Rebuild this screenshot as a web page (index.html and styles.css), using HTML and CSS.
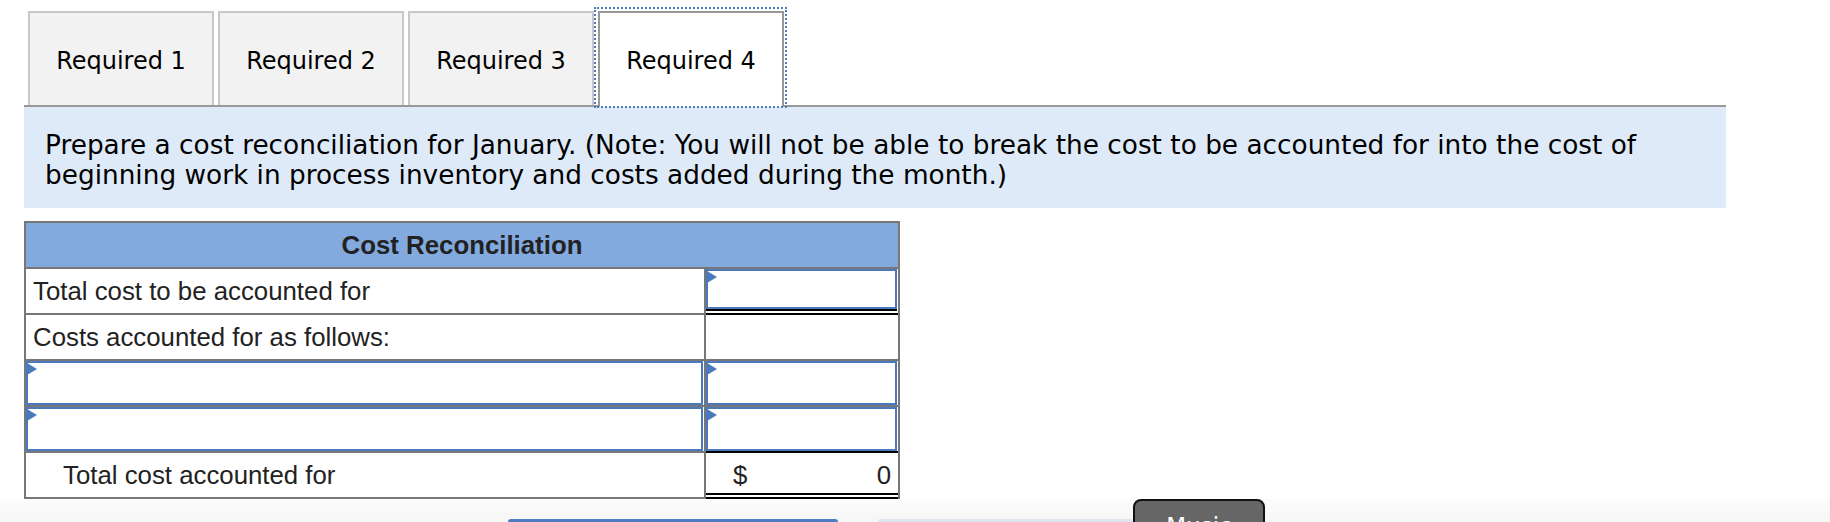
FILE: index.html
```html
<!DOCTYPE html>
<html>
<head>
    <title>Cost Reconciliation</title>
    <link rel="stylesheet" href="styles.css">
</head>
<body>
    <div class="page">
        <div class="tabs">
            <button class="tab">Required 1</button>
            <button class="tab">Required 2</button>
            <button class="tab">Required 3</button>
            <button class="tab active">Required 4</button>
        </div>

        <div class="prompt">
            Prepare a cost reconciliation for January. (Note: You will not be able to break the cost to be accounted for into the cost of beginning work in process inventory and costs added during the month.)
        </div>

        <div class="recon">
            <div class="recon-title">Cost Reconciliation</div>

            <div class="cell label">Total cost to be accounted for</div>
            <div class="cell"><div class="entry underlined"></div></div>

            <div class="cell label">Costs accounted for as follows:</div>
            <div class="cell"></div>

            <div class="cell"><div class="entry"></div></div>
            <div class="cell"><div class="entry"></div></div>

            <div class="cell"><div class="entry"></div></div>
            <div class="cell"><div class="entry"></div></div>

            <div class="cell label indent">Total cost accounted for</div>
            <div class="cell grand-total">
                <span>$</span>
                <span>0</span>
            </div>
        </div>
    </div>

    <div class="footer">
        <div class="bar bar-blue"></div>
        <div class="bar bar-light"></div>
        <button class="music-btn">Music</button>
    </div>
</body>
</html>
```

FILE: styles.css
```css
html, body {
    overflow: hidden;
}
body {
    margin: 0;
    background: white;
    font-family: "DejaVu Sans", Verdana, sans-serif;
    color: #000;
}
.page {
    padding-left: 24px;
    width: 1702px;
}

/* tab strip */
.tabs {
    display: flex;
    align-items: flex-end;
    gap: 4px;
    padding: 11px 0 0 4px;
    border-bottom: 2px solid #999;
}
.tab {
    width: 186px;
    height: 94px;
    box-sizing: border-box;
    background: #f2f2f2;
    border: 2px solid #c8c8c8;
    border-bottom: none;
    font-family: "DejaVu Sans", Verdana, sans-serif;
    font-size: 24px;
    color: #000;
    padding: 3px 0 0;
    cursor: pointer;
}
.tab.active {
    position: relative;
    height: 96px;
    margin-bottom: -2px;
    padding-bottom: 1px;
    background: white;
    border-color: #999;
}
.tab.active::after {
    content: '';
    position: absolute;
    top: -6px;
    left: -6px;
    right: -5px;
    bottom: -1px;
    border: 2px dotted #4a7ebb;
}

/* instructions */
.prompt {
    background: #deeaf7;
    padding: 23px 60px 18px 21px;
    font-size: 26.35px;
    line-height: 30px;
}

/* reconciliation grid */
.recon {
    display: grid;
    grid-template-columns: 678px 192px;
    grid-auto-rows: 44px;
    gap: 2px;
    width: 872px;
    margin-top: 13px;
    border: 2px solid #777;
    background: #777;
    font-family: "Liberation Sans", Arial, sans-serif;
    font-size: 25.8px;
    color: #222;
}
.recon-title {
    grid-column: 1 / 3;
    background: #83aadf;
    font-weight: bold;
    display: flex;
    align-items: center;
    justify-content: center;
}
.cell {
    background: white;
    display: flex;
    align-items: center;
}
.label {
    padding: 0 0 0 7px;
}
.label.indent {
    padding-left: 37px;
}
.entry {
    position: relative;
    align-self: stretch;
    flex: 1;
    margin-right: 1px;
    border: 2px solid #4b79bd;
}
.entry::before {
    content: '';
    position: absolute;
    top: 0;
    left: -1px;
    border-left: 10px solid #4b79bd;
    border-top: 6.5px solid transparent;
    border-bottom: 6.5px solid transparent;
}
.entry.underlined {
    align-self: flex-start;
    height: 36px;
    flex: none;
    width: 187px;
    box-shadow: 0 2px 0 #000;
}
.cell:has(.underlined) {
    box-shadow: 0 2px 0 #000;
}
.grand-total {
    justify-content: space-between;
    padding: 0 7px 0 27px;
    background: linear-gradient(to top, #fff 2px, #000 2px, #000 4px, #fff 4px);
    box-shadow: 0 -2px 0 #000, 0 2px 0 #000;
}

/* bottom toolbar, cut off by the window */
.footer {
    position: relative;
    height: 23px;
    background: linear-gradient(#fcfcfc, #f6f6f6);
    display: flex;
    align-items: flex-end;
    overflow: hidden;
}
.bar {
    height: 3px;
    border-radius: 4px 4px 0 0;
}
.bar-blue {
    width: 330px;
    margin-left: 508px;
    background: #4d7cc0;
}
.bar-light {
    width: 255px;
    margin-left: 40px;
    background: #dce4ee;
}
.music-btn {
    position: absolute;
    left: 1133px;
    top: 0;
    width: 132px;
    height: 44px;
    background: #666;
    border: 2px solid #111;
    border-radius: 8px;
    color: white;
    font-family: "DejaVu Sans", Verdana, sans-serif;
    font-size: 23px;
    padding: 10px 0 0;
    text-align: center;
}
```
